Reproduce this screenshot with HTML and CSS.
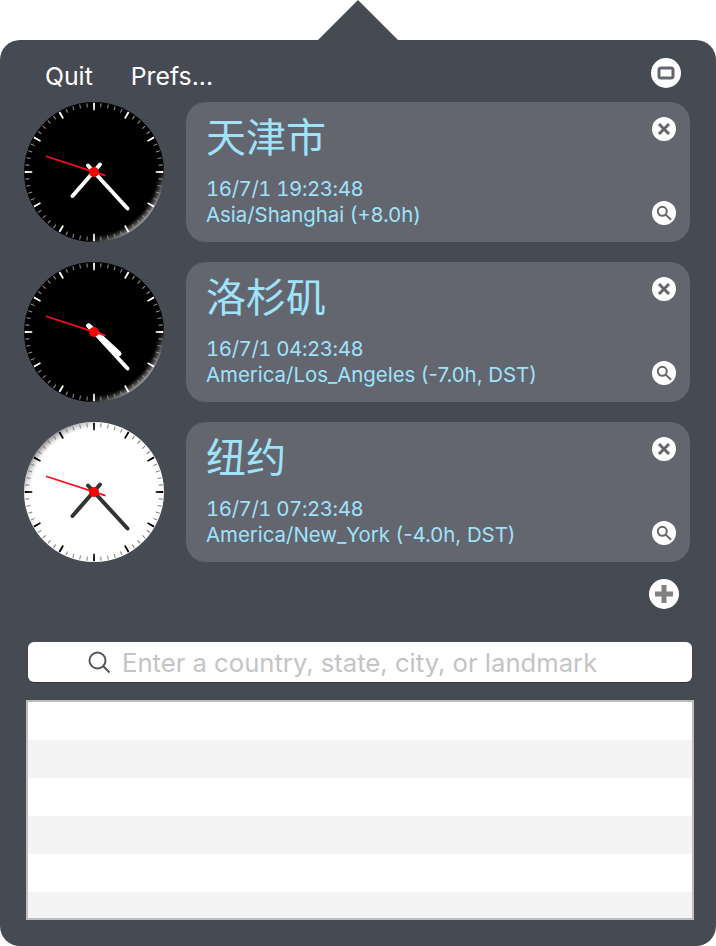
FILE: index.html
```html
<!DOCTYPE html>
<html lang="en">
<head>
  <meta charset="UTF-8" />
  <title>World Clocks</title>
  <link rel="stylesheet" href="styles.css">
</head>
<body>
  <svg class="defs" width="0" height="0">
    <defs>
      <!-- soft glow along the edge of the dial, cut down to one side by a mask -->
      <radialGradient id="glowDark">
        <stop offset="0.89" stop-color="#fff" stop-opacity="0" />
        <stop offset="1" stop-color="#fff" stop-opacity="0.65" />
      </radialGradient>
      <radialGradient id="glowLight">
        <stop offset="0.89" stop-color="#000" stop-opacity="0" />
        <stop offset="1" stop-color="#000" stop-opacity="0.42" />
      </radialGradient>
      <linearGradient id="sideDark" x1="0" y1="0" x2="1" y2="1">
        <stop offset="0.72" stop-color="#000" />
        <stop offset="0.85" stop-color="#fff" />
      </linearGradient>
      <linearGradient id="sideLight" x1="0" y1="0" x2="1" y2="1">
        <stop offset="0.15" stop-color="#fff" />
        <stop offset="0.28" stop-color="#000" />
      </linearGradient>
      <mask id="maskDark"><rect width="140" height="140" fill="url(#sideDark)" /></mask>
      <mask id="maskLight"><rect width="140" height="140" fill="url(#sideLight)" /></mask>
      <g id="face">
        <circle class="face" cx="70" cy="70" r="70" />
        <circle class="rim" cx="70" cy="70" r="70" />
        <!-- minute and hour marks -->
        <circle class="ticks" cx="70" cy="70" r="67" pathLength="60" />
        <circle class="hours" cx="70" cy="70" r="65.5" pathLength="12" />
      </g>
      <g id="second">
        <line class="hand-second" x1="22" y1="54.3" x2="81.5" y2="73.6" />
        <circle class="pin" cx="70" cy="70" r="5" />
      </g>
    </defs>
  </svg>

  <div class="popover">
    <div class="arrow"></div>

    <div class="topbar">
      <div class="menu">
        <span>Quit</span>
        <span>Prefs...</span>
      </div>
      <span class="round-btn big">
        <svg width="30" height="30" viewBox="0 0 30 30"><rect class="icon-line" x="8" y="10" width="14" height="10" rx="2" /></svg>
      </span>
    </div>

    <div class="clocks">
      <div class="row">
        <svg class="clock dark" width="140" height="140" viewBox="0 0 140 140">
          <use href="#face" />
          <line class="hand" x1="48.5" y1="94" x2="76" y2="62.5" />
          <line class="hand" x1="103.5" y1="106.5" x2="64" y2="63.5" />
          <use href="#second" />
        </svg>
        <div class="card">
          <div class="info">
            <div class="city">天津市</div>
            <div class="line first">16/7/1 19:23:48</div>
            <div class="line">Asia/Shanghai (+8.0h)</div>
          </div>
          <div class="actions">
            <span class="round-btn">
              <svg width="24" height="24" viewBox="0 0 24 24"><path class="icon-x" d="M7 7l10 10M17 7l-10 10" /></svg>
            </span>
            <span class="round-btn">
              <svg width="24" height="24" viewBox="0 0 24 24"><circle class="icon-glass" cx="10.300" cy="10.300" r="4.500" /><path class="icon-glass" d="M13.700 13.700l5.300 5" /></svg>
            </span>
          </div>
        </div>
      </div>

      <div class="row">
        <svg class="clock dark" width="140" height="140" viewBox="0 0 140 140">
          <use href="#face" />
          <line class="hand thick" x1="65" y1="64" x2="95" y2="91.500" />
          <line class="hand" x1="103.500" y1="106.500" x2="64" y2="63.500" />
          <use href="#second" />
        </svg>
        <div class="card">
          <div class="info">
            <div class="city">洛杉矶</div>
            <div class="line first">16/7/1 04:23:48</div>
            <div class="line">America/Los_Angeles (-7.0h, DST)</div>
          </div>
          <div class="actions">
            <span class="round-btn">
              <svg width="24" height="24" viewBox="0 0 24 24"><path class="icon-x" d="M7 7l10 10M17 7l-10 10" /></svg>
            </span>
            <span class="round-btn">
              <svg width="24" height="24" viewBox="0 0 24 24"><circle class="icon-glass" cx="10.300" cy="10.300" r="4.500" /><path class="icon-glass" d="M13.700 13.700l5.300 5" /></svg>
            </span>
          </div>
        </div>
      </div>

      <div class="row">
        <svg class="clock light" width="140" height="140" viewBox="0 0 140 140">
          <use href="#face" />
          <line class="hand" x1="48.500" y1="94" x2="76" y2="62.500" />
          <line class="hand" x1="103.500" y1="106.500" x2="64" y2="63.500" />
          <use href="#second" />
        </svg>
        <div class="card">
          <div class="info">
            <div class="city">纽约</div>
            <div class="line first">16/7/1 07:23:48</div>
            <div class="line">America/New_York (-4.0h, DST)</div>
          </div>
          <div class="actions">
            <span class="round-btn">
              <svg width="24" height="24" viewBox="0 0 24 24"><path class="icon-x" d="M7 7l10 10M17 7l-10 10" /></svg>
            </span>
            <span class="round-btn">
              <svg width="24" height="24" viewBox="0 0 24 24"><circle class="icon-glass" cx="10.300" cy="10.300" r="4.500" /><path class="icon-glass" d="M13.700 13.700l5.300 5" /></svg>
            </span>
          </div>
        </div>
      </div>
    </div>

    <div class="add-row">
      <span class="round-btn big">
        <svg width="30" height="30" viewBox="0 0 30 30"><path class="icon-plus" d="M15 6v18M6 15h18" /></svg>
      </span>
    </div>

    <div class="search">
      <svg class="search-icon" width="26" height="26" viewBox="0 0 26 26"><circle cx="11.500" cy="11.500" r="8" /><path d="M17.300 17.300l6.200 6.200" /></svg>
      <span class="placeholder">Enter a country, state, city, or landmark</span>
    </div>

    <div class="results">
      <div class="result"></div>
      <div class="result"></div>
      <div class="result"></div>
      <div class="result"></div>
      <div class="result"></div>
      <div class="result"></div>
    </div>
  </div>
</body>
</html>
```

FILE: styles.css
```css
html, body {
  margin: 0;
  background: #fff;
}
body {
  font-family: Inter, "Noto Sans CJK SC", sans-serif;
  height: 946px;
  overflow: hidden;
}
.defs {
  position: absolute;
}
.popover {
  position: relative;
  margin-top: 40px;
  height: 906px;
  box-sizing: border-box;
  background: #464a53;
  border-radius: 20px;
}
/* little triangle pointing at the menu bar icon */
.arrow {
  position: absolute;
  left: 318px;
  top: -40px;
  width: 0;
  height: 0;
  border-left: 40px solid transparent;
  border-right: 40px solid transparent;
  border-bottom: 40px solid #464a53;
}
.topbar {
  height: 62px;
  display: flex;
  align-items: center;
  justify-content: space-between;
  padding: 0 35px 0 45px;
}
.menu {
  display: flex;
  gap: 38px;
  color: #fff;
  font-size: 24.800px;
  line-height: 30px;
  padding-top: 11px;
  padding-bottom: 1px;
}
.topbar .round-btn {
  margin-top: 4px;
}
.round-btn {
  width: 24px;
  height: 24px;
  flex: none;
  border-radius: 50%;
  background: #fff;
  display: block;
}
.round-btn svg {
  display: block;
}
.round-btn.big {
  width: 30px;
  height: 30px;
}
.icon-line {
  fill: none;
  stroke: #63666f;
  stroke-width: 3;
}
.icon-x {
  fill: none;
  stroke: #63666f;
  stroke-width: 3;
}
.icon-glass {
  fill: none;
  stroke: #63666f;
  stroke-width: 2;
}
.icon-plus {
  fill: none;
  stroke: #808080;
  stroke-width: 5;
}
.clocks {
  display: flex;
  flex-direction: column;
  gap: 20px;
}
.row {
  display: flex;
  align-items: center;
  gap: 22px;
  padding-left: 24px;
  padding-right: 26px;
}
.clock {
  flex: none;
  display: block;
}
/* colours go through variables, rules like .light .face don't reach into <use> */
.dark {
  --face: #000;
  --glow: url(#glowDark);
  --side: url(#maskDark);
  --minor: #8f8f8f;
  --major: #fff;
}
.light {
  --face: #fff;
  --glow: url(#glowLight);
  --side: url(#maskLight);
  --minor: #808080;
  --major: #000;
}
.face {
  fill: var(--face);
}
.rim {
  fill: var(--glow);
  mask: var(--side);
}
.ticks {
  fill: none;
  stroke: var(--minor);
  stroke-width: 4;
  stroke-dasharray: 0.150 0.850;
  stroke-dashoffset: 0.075;
}
.hours {
  fill: none;
  stroke: var(--major);
  stroke-width: 7.500;
  stroke-dasharray: 0.050 0.950;
  stroke-dashoffset: 0.025;
}
.hand {
  stroke: #fff;
  stroke-width: 4;
  stroke-linecap: round;
}
.hand.thick {
  stroke-width: 5;
}
.light .hand {
  stroke: #333;
}
.hand-second {
  stroke: #fb0d1b;
  stroke-width: 1.700;
}
.pin {
  fill: #fe0000;
}
.card {
  flex: 1;
  height: 140px;
  box-sizing: border-box;
  background: #63666f;
  border-radius: 20px;
  display: flex;
  justify-content: space-between;
  padding: 13px 14px 17px 20px;
}
.info {
  color: #9fe3fb;
}
.city {
  font-size: 40px;
  line-height: 46px;
}
.line {
  font-size: 20.400px;
  line-height: 26px;
}
.line.first {
  margin-top: 15px;
  font-variant-numeric: tabular-nums;
  letter-spacing: -0.400px;
}
.actions {
  display: flex;
  flex-direction: column;
  justify-content: space-between;
  padding-top: 2px;
}
.add-row {
  display: flex;
  justify-content: flex-end;
  padding: 17px 37px 0 0;
  height: 33px;
}
.search {
  margin: 30px 24px 0 28px;
  height: 40px;
  box-sizing: border-box;
  background: #fff;
  border-radius: 6px;
  box-shadow: 0 1px 0 #33363c;
  display: flex;
  align-items: center;
  gap: 10px;
  padding-left: 58px;
}
.search-icon {
  flex: none;
  fill: none;
  stroke: #555;
  stroke-width: 2;
}
.placeholder {
  color: #c4c4c4;
  font-size: 25.650px;
  line-height: 30px;
  padding-top: 2px;
  white-space: nowrap;
}
.results {
  margin: 18px 22px 0 26px;
  height: 220px;
  box-sizing: border-box;
  border: 2px solid #bdbdbd;
  overflow: hidden;
}
.result {
  height: 38px;
  background: #fff;
}
.result:nth-child(even) {
  background: #f4f4f4;
}
```
